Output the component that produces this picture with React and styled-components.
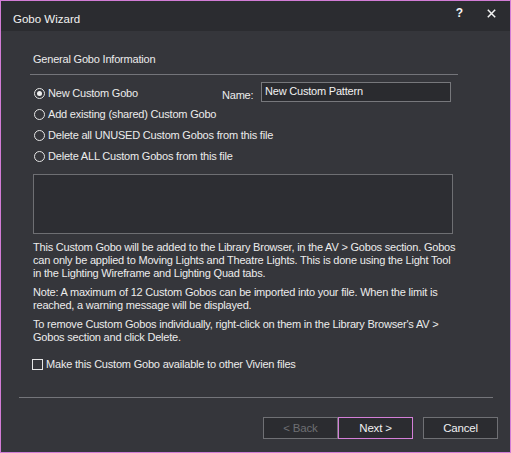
import React, { useState } from 'react';
import styled, { createGlobalStyle } from 'styled-components';

const GlobalStyle = createGlobalStyle`
  html, body {
    margin: 0;
    padding: 0;
    background: #35363b;
  }
`;

const Window = styled.div`
  width: 511px;
  height: 453px;
  box-sizing: border-box;
  border: 1px solid #d27cd6;
  background: #35363b;
  display: flex;
  flex-direction: column;
  font-family: "Liberation Sans", Arial, sans-serif;
  font-size: 11px;
  letter-spacing: -0.2px;
  color: #ececec;
`;

const TitleBar = styled.div`
  height: 30px;
  flex: none;
  background: #2b2c30;
  display: flex;
  justify-content: space-between;
  padding: 0 0 0 12px;
`;

const Title = styled.div`
  font-size: 11.5px;
  letter-spacing: 0;
  line-height: 14px;
  padding-top: 11px;
  color: #f2f2f2;
`;

const Controls = styled.div`
  display: flex;
  align-items: flex-start;
  gap: 24px;
  padding: 6px 14px 0 0;
`;

const HelpGlyph = styled.span`
  font-size: 12px;
  font-weight: bold;
  line-height: 12px;
  color: #f4f4f4;
`;

const CloseIcon = () => (
  <svg width="9" height="9" viewBox="0 0 9 9" style={{ marginTop: 2 }}>
    <path d="M0.8 0.8 L8.2 8.2 M8.2 0.8 L0.8 8.2" stroke="#f4f4f4" strokeWidth="1.5" />
  </svg>
);

const Content = styled.div`
  padding-left: 29px;
  width: 428px;
`;

const SectionTitle = styled.div`
  margin-top: 21px;
  padding: 0 0 7px 3px;
  line-height: 15px;
  border-bottom: 1px solid #74757a;
`;

const Options = styled.div`
  margin-top: 8px;
  display: flex;
  flex-direction: column;
`;

const OptionRow = styled.div`
  height: 21px;
  display: flex;
  align-items: center;
`;

const RadioLabel = styled.label`
  display: flex;
  align-items: center;
  gap: 3px;
  padding-left: 4px;
  width: ${(p) => (p.$wide ? '188px' : 'auto')};
  flex: none;
  cursor: pointer;
  line-height: 15px;
`;

const RadioDot = styled.span`
  width: 11px;
  height: 11px;
  box-sizing: border-box;
  border-radius: 50%;
  border: 1px solid #e6e6e6;
  display: flex;
  align-items: center;
  justify-content: center;
  flex: none;

  &::after {
    content: '';
    width: 5px;
    height: 5px;
    border-radius: 50%;
    background: ${(p) => (p.$checked ? '#f0f0f0' : 'transparent')};
  }
`;

const NameLabel = styled.span`
  width: 39px;
  flex: none;
  padding-top: 3px;
`;

const NameInput = styled.input`
  width: 190px;
  height: 20px;
  box-sizing: border-box;
  margin-top: -3px;
  background: #2a2b2f;
  border: 1px solid #77787c;
  color: #f2f2f2;
  font: inherit;
  letter-spacing: inherit;
  padding: 0 3px 2px;
  outline: none;
`;

const PreviewBox = styled.div`
  margin: 7px 0 0 3px;
  width: 420px;
  height: 60px;
  box-sizing: border-box;
  border: 1px solid #6e6f73;
  background: #2d2e33;
`;

const Notes = styled.div`
  margin: 7px 0 0 3px;
  display: flex;
  flex-direction: column;
  gap: 6px;
  line-height: 13px;
  white-space: nowrap;
`;

const CheckRow = styled.label`
  margin-top: 13px;
  padding-left: 2px;
  display: flex;
  align-items: center;
  gap: 3px;
  line-height: 15px;
  cursor: pointer;
`;

const CheckBox = styled.span`
  width: 11px;
  height: 11px;
  box-sizing: border-box;
  border: 1px solid #e6e6e6;
  flex: none;
  background: ${(p) => (p.$checked ? '#e6e6e6' : 'transparent')};
`;

const Footer = styled.div`
  margin-top: auto;
  display: flex;
  flex-direction: column;
`;

const Separator = styled.div`
  margin: 0 17px 0 18px;
  height: 1px;
  background: #74757a;
`;

const ButtonBar = styled.div`
  display: flex;
  justify-content: flex-end;
  padding: 19px 12px 13px 0;
`;

const Button = styled.button`
  width: 75px;
  height: 22px;
  box-sizing: border-box;
  margin-left: ${(p) => (p.$gap ? '10px' : '0')};
  background: #2b2c30;
  border: 1px solid ${(p) => (p.$focused ? '#d47fd8' : '#6f7074')};
  color: ${(p) => (p.disabled ? '#6e6f73' : '#f0f0f0')};
  font-family: "Liberation Sans", Arial, sans-serif;
  font-size: 11.5px;
  letter-spacing: -0.2px;
  padding: 0 0 1px;
  cursor: ${(p) => (p.disabled ? 'default' : 'pointer')};
`;

const options = [
  'New Custom Gobo',
  'Add existing (shared) Custom Gobo',
  'Delete all UNUSED Custom Gobos from this file',
  'Delete ALL Custom Gobos from this file',
];

export default function App() {
  const [choice, setChoice] = useState(0);
  const [shared, setShared] = useState(false);
  const [name, setName] = useState('New Custom Pattern');

  return (
    <>
      <GlobalStyle />
      <Window>
        <TitleBar>
          <Title>Gobo Wizard</Title>
          <Controls>
            <HelpGlyph>?</HelpGlyph>
            <CloseIcon />
          </Controls>
        </TitleBar>

        <Content>
          <SectionTitle>General Gobo Information</SectionTitle>
          <Options>
            {options.map((text, i) => (
              <OptionRow key={text}>
                <RadioLabel $wide={i === 0} onClick={() => setChoice(i)}>
                  <RadioDot $checked={choice === i} />
                  {text}
                </RadioLabel>
                {i === 0 && (
                  <>
                    <NameLabel>Name:</NameLabel>
                    <NameInput value={name} onChange={(e) => setName(e.target.value)} />
                  </>
                )}
              </OptionRow>
            ))}
          </Options>

          <PreviewBox />

          <Notes>
            <div>
              This Custom Gobo will be added to the Library Browser, in the AV &gt; Gobos section. Gobos
              <br />
              can only be applied to Moving Lights and Theatre Lights. This is done using the Light Tool
              <br />
              in the Lighting Wireframe and Lighting Quad tabs.
            </div>
            <div>
              Note: A maximum of 12 Custom Gobos can be imported into your file. When the limit is
              <br />
              reached, a warning message will be displayed.
            </div>
            <div>
              To remove Custom Gobos individually, right-click on them in the Library Browser's AV &gt;
              <br />
              Gobos section and click Delete.
            </div>
          </Notes>

          <CheckRow onClick={() => setShared(!shared)}>
            <CheckBox $checked={shared} />
            Make this Custom Gobo available to other Vivien files
          </CheckRow>
        </Content>

        <Footer>
          <Separator />
          <ButtonBar>
            <Button disabled>&lt; Back</Button>
            <Button $focused>Next &gt;</Button>
            <Button $gap>Cancel</Button>
          </ButtonBar>
        </Footer>
      </Window>
    </>
  );
}
